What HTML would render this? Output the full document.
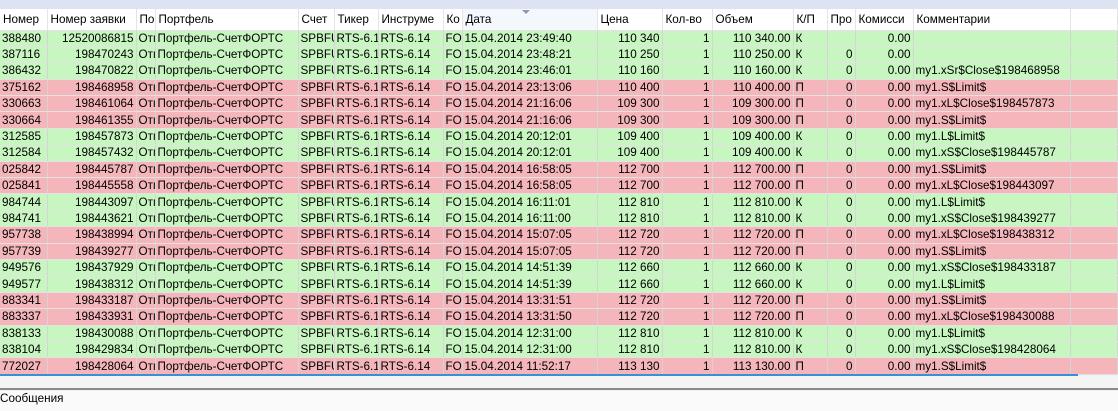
<!DOCTYPE html>
<html><head><meta charset="utf-8"><style>
body{margin:0;width:1118px;height:411px;overflow:hidden;background:#f0f0f0;font-family:"Liberation Sans",sans-serif;font-size:11.7px;color:#000;position:relative}
.top{position:absolute;left:0;top:0;width:1118px;height:9px;background:#dde3f3}
table{position:absolute;left:0;top:9px;border-collapse:collapse;table-layout:fixed;width:1118px}
td,th{height:16.4px;padding:0 2px;white-space:nowrap;overflow:hidden;border-right:1px solid #d4d4d4;border-bottom:1px solid #e2e2e2;box-sizing:border-box;line-height:15px}
th{height:21px;background:#fff;font-weight:normal;text-align:left;border-right:1px solid #e4e4e4;padding:0 3px}
tr.g td{background:#c8f6c1}
tr.p td{background:#f4b6bb}
.r{text-align:right}
.blue{position:absolute;left:0;top:374px;width:1078px;height:2px;background:#3b8fd8}
.bot{position:absolute;left:0;top:376px;width:1118px;height:12px;background:#f4f4f4}
.sep{position:absolute;left:0;top:388px;width:1118px;height:2px;background:#8a8a8a}
.msg{position:absolute;left:0;top:391px;width:1118px;height:20px;background:#fafafa;line-height:16px}
.arrow{position:absolute;left:522px;top:10px;width:0;height:0;border-left:4px solid transparent;border-right:4px solid transparent;border-top:4px solid #8a98b8}
</style></head><body>
<div class="top"></div>
<table>
<colgroup><col style="width:47px"><col style="width:89px"><col style="width:19px"><col style="width:143px"><col style="width:36px"><col style="width:44px"><col style="width:65px"><col style="width:19px"><col style="width:135px"><col style="width:65px"><col style="width:50px"><col style="width:81px"><col style="width:34px"><col style="width:28px"><col style="width:58px"><col style="width:157px"><col></colgroup>
<tr><th>Номер</th><th>Номер заявки</th><th>По</th><th>Портфель</th><th>Счет</th><th>Тикер</th><th>Инструме</th><th>Ко</th><th style="background:#f4f7fc;border-left:1px solid #bcd">Дата</th><th>Цена</th><th>Кол-во</th><th>Объем</th><th>К/П</th><th>Про</th><th>Комисси</th><th>Комментарии</th><th></th></tr>
<tr class="g"><td>388480</td><td class="r">12520086815</td><td>Отп</td><td>Портфель-СчетФОРТС</td><td>SPBFUT</td><td>RTS-6.14</td><td>RTS-6.14</td><td>FORTS</td><td>15.04.2014 23:49:40</td><td class="r">110 340</td><td class="r">1</td><td class="r">110 340.00</td><td>К</td><td class="r"></td><td class="r">0.00</td><td></td><td></td></tr>
<tr class="g"><td>387116</td><td class="r">198470243</td><td>Отп</td><td>Портфель-СчетФОРТС</td><td>SPBFUT</td><td>RTS-6.14</td><td>RTS-6.14</td><td>FORTS</td><td>15.04.2014 23:48:21</td><td class="r">110 250</td><td class="r">1</td><td class="r">110 250.00</td><td>К</td><td class="r">0</td><td class="r">0.00</td><td></td><td></td></tr>
<tr class="g"><td>386432</td><td class="r">198470822</td><td>Отп</td><td>Портфель-СчетФОРТС</td><td>SPBFUT</td><td>RTS-6.14</td><td>RTS-6.14</td><td>FORTS</td><td>15.04.2014 23:46:01</td><td class="r">110 160</td><td class="r">1</td><td class="r">110 160.00</td><td>К</td><td class="r">0</td><td class="r">0.00</td><td>my1.xSr$Close$198468958</td><td></td></tr>
<tr class="p"><td>375162</td><td class="r">198468958</td><td>Отп</td><td>Портфель-СчетФОРТС</td><td>SPBFUT</td><td>RTS-6.14</td><td>RTS-6.14</td><td>FORTS</td><td>15.04.2014 23:13:06</td><td class="r">110 400</td><td class="r">1</td><td class="r">110 400.00</td><td>П</td><td class="r">0</td><td class="r">0.00</td><td>my1.S$Limit$</td><td></td></tr>
<tr class="p"><td>330663</td><td class="r">198461064</td><td>Отп</td><td>Портфель-СчетФОРТС</td><td>SPBFUT</td><td>RTS-6.14</td><td>RTS-6.14</td><td>FORTS</td><td>15.04.2014 21:16:06</td><td class="r">109 300</td><td class="r">1</td><td class="r">109 300.00</td><td>П</td><td class="r">0</td><td class="r">0.00</td><td>my1.xL$Close$198457873</td><td></td></tr>
<tr class="p"><td>330664</td><td class="r">198461355</td><td>Отп</td><td>Портфель-СчетФОРТС</td><td>SPBFUT</td><td>RTS-6.14</td><td>RTS-6.14</td><td>FORTS</td><td>15.04.2014 21:16:06</td><td class="r">109 300</td><td class="r">1</td><td class="r">109 300.00</td><td>П</td><td class="r">0</td><td class="r">0.00</td><td>my1.S$Limit$</td><td></td></tr>
<tr class="g"><td>312585</td><td class="r">198457873</td><td>Отп</td><td>Портфель-СчетФОРТС</td><td>SPBFUT</td><td>RTS-6.14</td><td>RTS-6.14</td><td>FORTS</td><td>15.04.2014 20:12:01</td><td class="r">109 400</td><td class="r">1</td><td class="r">109 400.00</td><td>К</td><td class="r">0</td><td class="r">0.00</td><td>my1.L$Limit$</td><td></td></tr>
<tr class="g"><td>312584</td><td class="r">198457432</td><td>Отп</td><td>Портфель-СчетФОРТС</td><td>SPBFUT</td><td>RTS-6.14</td><td>RTS-6.14</td><td>FORTS</td><td>15.04.2014 20:12:01</td><td class="r">109 400</td><td class="r">1</td><td class="r">109 400.00</td><td>К</td><td class="r">0</td><td class="r">0.00</td><td>my1.xS$Close$198445787</td><td></td></tr>
<tr class="p"><td>025842</td><td class="r">198445787</td><td>Отп</td><td>Портфель-СчетФОРТС</td><td>SPBFUT</td><td>RTS-6.14</td><td>RTS-6.14</td><td>FORTS</td><td>15.04.2014 16:58:05</td><td class="r">112 700</td><td class="r">1</td><td class="r">112 700.00</td><td>П</td><td class="r">0</td><td class="r">0.00</td><td>my1.S$Limit$</td><td></td></tr>
<tr class="p"><td>025841</td><td class="r">198445558</td><td>Отп</td><td>Портфель-СчетФОРТС</td><td>SPBFUT</td><td>RTS-6.14</td><td>RTS-6.14</td><td>FORTS</td><td>15.04.2014 16:58:05</td><td class="r">112 700</td><td class="r">1</td><td class="r">112 700.00</td><td>П</td><td class="r">0</td><td class="r">0.00</td><td>my1.xL$Close$198443097</td><td></td></tr>
<tr class="g"><td>984744</td><td class="r">198443097</td><td>Отп</td><td>Портфель-СчетФОРТС</td><td>SPBFUT</td><td>RTS-6.14</td><td>RTS-6.14</td><td>FORTS</td><td>15.04.2014 16:11:01</td><td class="r">112 810</td><td class="r">1</td><td class="r">112 810.00</td><td>К</td><td class="r">0</td><td class="r">0.00</td><td>my1.L$Limit$</td><td></td></tr>
<tr class="g"><td>984741</td><td class="r">198443621</td><td>Отп</td><td>Портфель-СчетФОРТС</td><td>SPBFUT</td><td>RTS-6.14</td><td>RTS-6.14</td><td>FORTS</td><td>15.04.2014 16:11:00</td><td class="r">112 810</td><td class="r">1</td><td class="r">112 810.00</td><td>К</td><td class="r">0</td><td class="r">0.00</td><td>my1.xS$Close$198439277</td><td></td></tr>
<tr class="p"><td>957738</td><td class="r">198438994</td><td>Отп</td><td>Портфель-СчетФОРТС</td><td>SPBFUT</td><td>RTS-6.14</td><td>RTS-6.14</td><td>FORTS</td><td>15.04.2014 15:07:05</td><td class="r">112 720</td><td class="r">1</td><td class="r">112 720.00</td><td>П</td><td class="r">0</td><td class="r">0.00</td><td>my1.xL$Close$198438312</td><td></td></tr>
<tr class="p"><td>957739</td><td class="r">198439277</td><td>Отп</td><td>Портфель-СчетФОРТС</td><td>SPBFUT</td><td>RTS-6.14</td><td>RTS-6.14</td><td>FORTS</td><td>15.04.2014 15:07:05</td><td class="r">112 720</td><td class="r">1</td><td class="r">112 720.00</td><td>П</td><td class="r">0</td><td class="r">0.00</td><td>my1.S$Limit$</td><td></td></tr>
<tr class="g"><td>949576</td><td class="r">198437929</td><td>Отп</td><td>Портфель-СчетФОРТС</td><td>SPBFUT</td><td>RTS-6.14</td><td>RTS-6.14</td><td>FORTS</td><td>15.04.2014 14:51:39</td><td class="r">112 660</td><td class="r">1</td><td class="r">112 660.00</td><td>К</td><td class="r">0</td><td class="r">0.00</td><td>my1.xS$Close$198433187</td><td></td></tr>
<tr class="g"><td>949577</td><td class="r">198438312</td><td>Отп</td><td>Портфель-СчетФОРТС</td><td>SPBFUT</td><td>RTS-6.14</td><td>RTS-6.14</td><td>FORTS</td><td>15.04.2014 14:51:39</td><td class="r">112 660</td><td class="r">1</td><td class="r">112 660.00</td><td>К</td><td class="r">0</td><td class="r">0.00</td><td>my1.L$Limit$</td><td></td></tr>
<tr class="p"><td>883341</td><td class="r">198433187</td><td>Отп</td><td>Портфель-СчетФОРТС</td><td>SPBFUT</td><td>RTS-6.14</td><td>RTS-6.14</td><td>FORTS</td><td>15.04.2014 13:31:51</td><td class="r">112 720</td><td class="r">1</td><td class="r">112 720.00</td><td>П</td><td class="r">0</td><td class="r">0.00</td><td>my1.S$Limit$</td><td></td></tr>
<tr class="p"><td>883337</td><td class="r">198433931</td><td>Отп</td><td>Портфель-СчетФОРТС</td><td>SPBFUT</td><td>RTS-6.14</td><td>RTS-6.14</td><td>FORTS</td><td>15.04.2014 13:31:50</td><td class="r">112 720</td><td class="r">1</td><td class="r">112 720.00</td><td>П</td><td class="r">0</td><td class="r">0.00</td><td>my1.xL$Close$198430088</td><td></td></tr>
<tr class="g"><td>838133</td><td class="r">198430088</td><td>Отп</td><td>Портфель-СчетФОРТС</td><td>SPBFUT</td><td>RTS-6.14</td><td>RTS-6.14</td><td>FORTS</td><td>15.04.2014 12:31:00</td><td class="r">112 810</td><td class="r">1</td><td class="r">112 810.00</td><td>К</td><td class="r">0</td><td class="r">0.00</td><td>my1.L$Limit$</td><td></td></tr>
<tr class="g"><td>838104</td><td class="r">198429834</td><td>Отп</td><td>Портфель-СчетФОРТС</td><td>SPBFUT</td><td>RTS-6.14</td><td>RTS-6.14</td><td>FORTS</td><td>15.04.2014 12:31:00</td><td class="r">112 810</td><td class="r">1</td><td class="r">112 810.00</td><td>К</td><td class="r">0</td><td class="r">0.00</td><td>my1.xS$Close$198428064</td><td></td></tr>
<tr class="p"><td>772027</td><td class="r">198428064</td><td>Отп</td><td>Портфель-СчетФОРТС</td><td>SPBFUT</td><td>RTS-6.14</td><td>RTS-6.14</td><td>FORTS</td><td>15.04.2014 11:52:17</td><td class="r">113 130</td><td class="r">1</td><td class="r">113 130.00</td><td>П</td><td class="r">0</td><td class="r">0.00</td><td>my1.S$Limit$</td><td></td></tr>
</table>
<div class="arrow"></div>
<div class="blue"></div>
<div class="bot"></div>
<div class="sep"></div>
<div class="msg">Сообщения</div>
</body></html>
